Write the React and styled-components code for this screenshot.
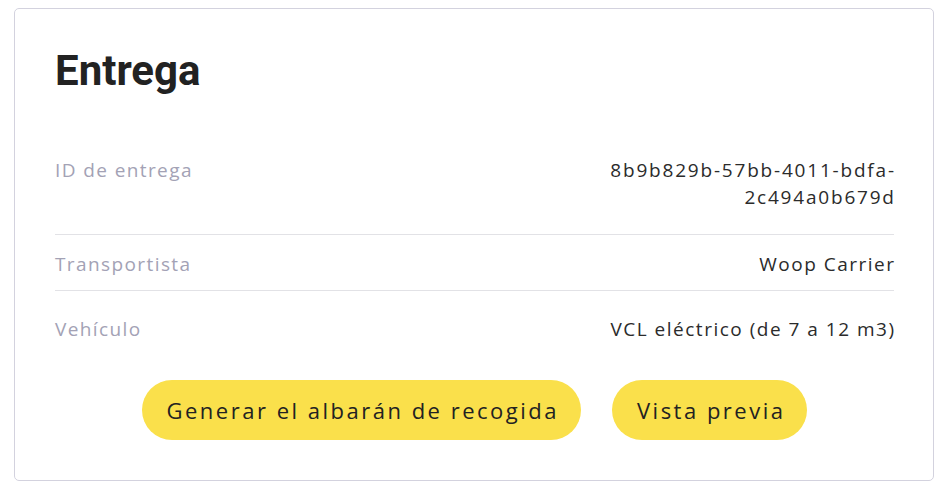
import styled, { createGlobalStyle } from "styled-components"

const GlobalStyle = createGlobalStyle`
  body {
    margin: 8px 14px;
    background: #ffffff;
    font-family: "Open Sans", "Liberation Sans", sans-serif;
  }
`

const rows = [
  { label: "ID de entrega", value: "8b9b829b-57bb-4011-bdfa-\n2c494a0b679d", top: 16, bottom: 23, spacing: 1.8 },
  { label: "Transportista", value: "Woop Carrier", top: 16, bottom: 12, spacing: 1.5 },
  { label: "Vehículo", value: "VCL eléctrico (de 7 a 12 m3)", top: 25, bottom: 12, spacing: 1.5, last: true },
]

const App = () => {
  return (
    <>
      <GlobalStyle />
      <StCard>
        <StTitle>Entrega</StTitle>
        <StList>
          {rows.map((row) => (
            <StRow key={row.label} $top={row.top} $bottom={row.bottom} $last={row.last}>
              <StLabel>{row.label}</StLabel>
              <StValue $spacing={row.spacing}>{row.value}</StValue>
            </StRow>
          ))}
        </StList>
        <StActions>
          <StButton>Generar el albarán de recogida</StButton>
          <StButton>Vista previa</StButton>
        </StActions>
      </StCard>
    </>
  )
}

const StCard = styled.div`
  width: 920px;
  box-sizing: border-box;
  border: 1px solid #d3d2de;
  border-radius: 5px;
  padding: 36px 39px 40px 40px;
`

const StTitle = styled.h1`
  margin: 0 0 44px;
  font-family: Roboto, "Liberation Sans", sans-serif;
  font-weight: 700;
  font-size: 42px;
  line-height: 52px;
  color: #222222;
`

const StList = styled.div`
  display: flex;
  flex-direction: column;
`

const StRow = styled.div`
  display: flex;
  justify-content: space-between;
  align-items: flex-start;
  padding: ${(p) => p.$top}px 0 ${(p) => p.$bottom}px;
  border-bottom: ${(p) => (p.$last ? "none" : "1px solid #e2e2e6")};
  font-size: 19px;
  line-height: 27px;
`

const StLabel = styled.span`
  color: #a3a2b5;
  letter-spacing: 1.4px;
`

const StValue = styled.span`
  color: #2b2b2b;
  text-align: right;
  white-space: pre-line;
  letter-spacing: ${(p) => p.$spacing}px;
  margin-right: -${(p) => p.$spacing}px;
`

const StActions = styled.div`
  display: flex;
  justify-content: center;
  gap: 31px;
  margin-top: 25px;
`

const StButton = styled.button`
  height: 60px;
  padding: 0 22px 0 25px;
  border: none;
  border-radius: 30px;
  background: #fae04b;
  color: #222222;
  font-family: "Open Sans", "Liberation Sans", sans-serif;
  font-size: 22px;
  letter-spacing: 2.5px;
  cursor: pointer;
`

export default App
